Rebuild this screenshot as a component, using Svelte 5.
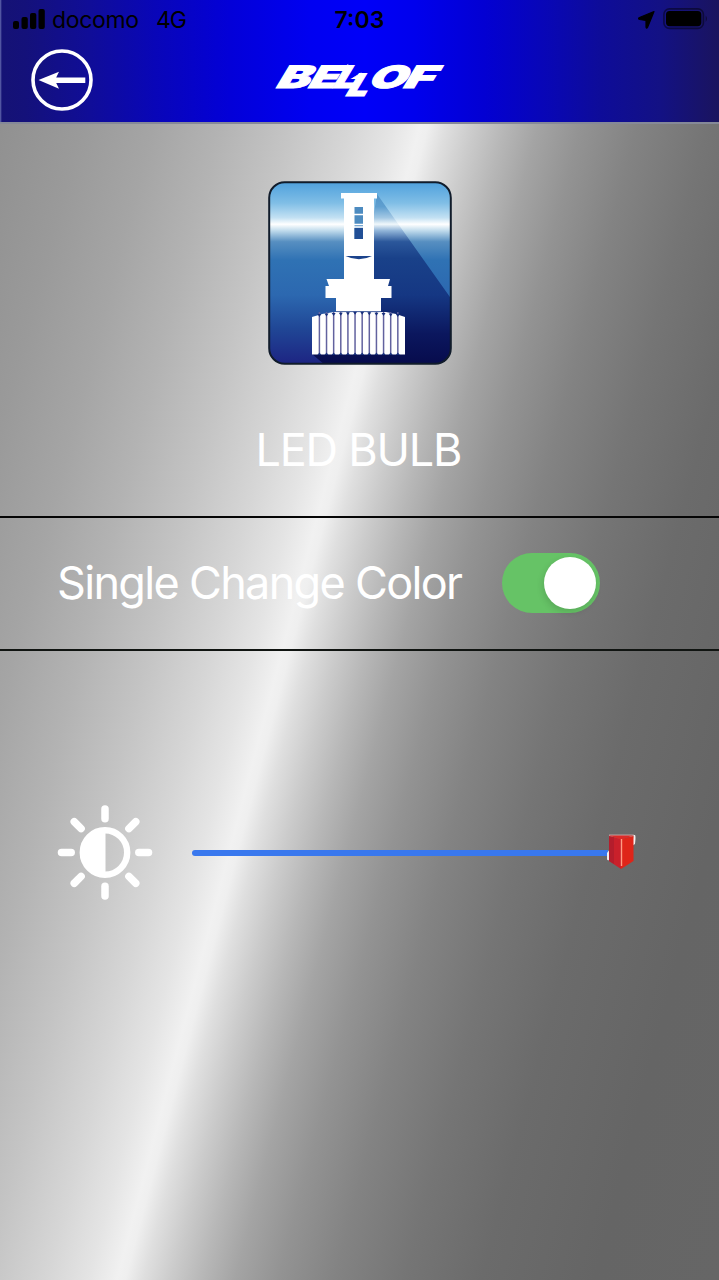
<script>
  let enabled = $state(true);
  const rays = [0, 45, 90, 135, 180, 225, 270, 315];
  const grooves = Array.from({ length: 12 }, (_, i) => i);
</script>

<main>
  <header>
    <div class="status">
      <svg class="signal" width="32" height="22" viewBox="0 0 32 22">
        <rect x="0" y="13" width="6" height="8" rx="2" />
        <rect x="8.5" y="9" width="6.3" height="12" rx="2" />
        <rect x="17" y="5" width="6.3" height="16" rx="2" />
        <rect x="25.5" y="1" width="6.3" height="20" rx="2" />
      </svg>
      <svg class="carrier" width="140" height="36" viewBox="0 0 140 36">
        <text x="0" y="28" textLength="87">docomo</text>
        <text x="104" y="28" textLength="31">4G</text>
      </svg>
      <svg class="clock" width="54" height="36" viewBox="0 0 54 36">
        <text x="1.5" y="28" textLength="50">7:03</text>
      </svg>
      <svg class="location" width="18" height="20" viewBox="0 0 18 20">
        <path d="M16 1.5 9.5 17.5 Q8.5 19 8 17 L8 10.5 1.5 9.5 Q-.5 8.5 1.5 7.5Z" stroke="#000" stroke-width="1.2" stroke-linejoin="round" />
      </svg>
      <svg class="battery" width="46" height="22" viewBox="0 0 46 22">
        <rect x=".9" y=".9" width="39.5" height="19.5" rx="5.5" fill="none" stroke="#000" stroke-opacity=".45" stroke-width="1.6" />
        <rect x="3" y="3" width="35.3" height="15.2" rx="3.6" />
        <path d="M42.7 7.5 q2.6 3.2 0 6.4z" opacity=".45" />
      </svg>
    </div>
    <div class="navbar">
      <button class="back" aria-label="Back">
        <svg width="64" height="64" viewBox="0 0 64 64">
          <circle cx="32" cy="32" r="29" fill="none" stroke="#fff" stroke-width="3.6" />
          <path d="M8.5 32 29 23.7 26.2 29.4H55.3V35H26.2L29 40.8Z" fill="#fff" />
        </svg>
      </button>
      <svg class="logo" width="214" height="60" viewBox="-20 0 214 60">
        <g transform="translate(0 29.5) skewX(-31)">
          <text x="2" y="0" textLength="33" lengthAdjust="spacingAndGlyphs">B</text>
          <text x="34" y="0" textLength="28" lengthAdjust="spacingAndGlyphs">E</text>
          <text x="59" y="0" textLength="22" lengthAdjust="spacingAndGlyphs">L</text>
          <path d="M56.500 -17.500 62 -22.500 V-17.500Z" />
          <text x="77" y="8.5" textLength="21" lengthAdjust="spacingAndGlyphs">L</text>
          <path d="M74.500 -9 80 -14 V-9Z" />
          <text x="94" y="0" textLength="37" lengthAdjust="spacingAndGlyphs">O</text>
          <text x="129" y="0" textLength="30" lengthAdjust="spacingAndGlyphs">F</text>
        </g>
      </svg>
    </div>
  </header>

  <section class="product">
    <svg class="bulb" width="184" height="184" viewBox="0 0 184 184">
      <defs>
        <linearGradient id="sky" x1="0" y1="0" x2="0" y2="1">
          <stop offset="0" stop-color="#4c9fdc" />
          <stop offset=".12" stop-color="#80bee6" />
          <stop offset=".2" stop-color="#c3e1f3" />
          <stop offset=".235" stop-color="#fff" />
          <stop offset=".27" stop-color="#c0dbec" />
          <stop offset=".33" stop-color="#578fc1" />
          <stop offset=".43" stop-color="#2f72b4" />
          <stop offset=".62" stop-color="#2c68b0" />
          <stop offset=".8" stop-color="#204796" />
          <stop offset="1" stop-color="#1d2382" />
        </linearGradient>
        <linearGradient id="shade" gradientUnits="userSpaceOnUse" x1="0" y1="0" x2="0" y2="184">
          <stop offset="0" stop-color="#4389c0" />
          <stop offset=".14" stop-color="#5f9fd0" />
          <stop offset=".2" stop-color="#a3c8e4" />
          <stop offset=".235" stop-color="#f0f7fb" />
          <stop offset=".27" stop-color="#90b4d8" />
          <stop offset=".33" stop-color="#2b579b" />
          <stop offset=".42" stop-color="#194189" />
          <stop offset=".62" stop-color="#153783" />
          <stop offset=".83" stop-color="#0b175e" />
          <stop offset="1" stop-color="#070b4c" />
        </linearGradient>
        <clipPath id="tile"><rect x="1" y="1" width="182" height="182" rx="15" /></clipPath>
      </defs>
      <g clip-path="url(#tile)">
        <rect width="184" height="184" fill="url(#sky)" />
        <path d="M109 13 184 119V184H57L44 173 70 130 98 80Z" fill="url(#shade)" />
      </g>
      <g fill="#fff">
        <path d="M73 12h36v5.5h-3V98h16l-2 7h3.500v12H113v17H68v-17h-10.500v-12H61l-2.500-7H76V17.500h-3z" />
        <path d="M44 136 54 133 66 131H118L128 133 137 136V173.500H44Z" />
      </g>
      <path d="M68 130.600H113" stroke="#173984" stroke-width=".8" />
      <path d="M77.500 75 H104 Q91 81.500 77.500 75Z" fill="#1b438c" />
      <rect x="86.500" y="26" width="8.500" height="32" fill="#4d8bc0" />
      <rect x="86.500" y="47" width="8.500" height="11" fill="#214f96" />
      <path d="M86 33.500h9M86 43.500h9M86 46h9" stroke="#fff" stroke-width="1.600" />
      {#each grooves as i}
        <path d={`M${51.4 + i * 7.13} 131V173.5`} stroke="#62629f" stroke-width="1.500" />
        <path d={`M${49.4 + i * 7.13} ${130.5 + Math.abs(i - 5.5) * 0.45} h4l-2 3z M${49.4 + i * 7.13} 174l2-2.500 2 2.500z`} fill="#172f7b" />
      {/each}
      <rect x="1.200" y="1.200" width="181.600" height="181.600" rx="15.500" fill="none" stroke="#111c2b" stroke-width="2" />
    </svg>
    <svg class="title" width="220" height="60" viewBox="0 0 220 60">
      <text x="5.5" y="46" textLength="207">LED BULB</text>
    </svg>
  </section>

  <section class="setting">
    <svg class="label" width="415" height="64" viewBox="0 0 415 64">
      <text x="1" y="48" textLength="406">Single Change Color</text>
    </svg>
    <button class="switch" class:enabled role="switch" aria-checked={enabled} aria-label="Single Change Color" onclick={() => (enabled = !enabled)}>
      <span></span>
    </button>
  </section>

  <section class="brightness">
    <svg class="sun" width="96" height="96" viewBox="-48 -47.5 96 96">
      <circle r="22.200" fill="none" stroke="#fff" stroke-width="6.400" />
      <path d="M.5 -23A23 23 0 0 0 .5 23Z" fill="#fff" />
      {#each rays as angle}
        <path d="M33.800 0H43.500" transform={`rotate(${angle})`} stroke="#fff" stroke-width="7.500" stroke-linecap="round" />
      {/each}
    </svg>
    <div class="track"></div>
    <svg class="thumb" width="32" height="40" viewBox="0 1 32 40">
      <path d="M2 21v6q0 2 3 1V17z M27 3h3q1 1 0 9l-3 2z" fill="#f2eeee" />
      <path d="M4 2.500H29L28 7 27 5H4Z" fill="#bca0a0" />
      <path d="M4 4 16 7V37L4 29Z" fill="#c9202b" />
      <path d="M4 4 9 5V32L4 29Z" fill="#a91c2c" opacity=".65" />
      <path d="M16 7 28.500 4V29L16 37Z" fill="#df2519" />
      <path d="M4 3.500H28.500L16 7.500Z" fill="#dc2a28" />
      <path d="M16.500 7V34" stroke="#ff9c83" stroke-width="1.400" />
    </svg>
  </section>
</main>

<style>
  :global(body) { margin: 0; }
  main {
    width: 719px;
    height: 1280px;
    overflow: hidden;
    display: flex;
    flex-direction: column;
    font-family: Inter, "Liberation Sans", sans-serif;
    background: linear-gradient(104.7deg, #8c8c8c 0, #919191 35px, #9a9a9a 110px, #a5a5a5 180px, #b3b3b3 245px, #c4c4c4 310px, #d6d6d6 370px, #e4e4e4 410px, #f1f1f1 438px, #efefef 446px, #dfdfdf 463px, #cbcbcb 490px, #b7b7b7 520px, #a4a4a4 552px, #939393 594px, #838383 648px, #757575 716px, #6b6b6b 790px, #656565 900px, #666 1020px);
  }
  svg { display: block; flex: none; }
  button { border: 0; padding: 0; background: none; }
  header {
    box-sizing: border-box;
    height: 124px;
    flex: none;
    border-bottom: 2px solid #858998;
    background: linear-gradient(90deg, #656bb0 0, #151275 2px, #14117a 25px, #100d98 90px, #0906b8 155px, #0300d8 230px, #0000f1 310px, #0000f8 365px, #0000ed 415px, #0300d2 485px, #0907b4 550px, #0e0c99 600px, #131184 660px, #1a145e 719px) padding-box;
  }
  .status { display: flex; height: 40px; align-items: flex-start; padding-left: 12.5px; }
  .signal { margin-top: 8px; }
  .carrier { margin-left: 7.5px; font-size: 23px; }
  .clock { margin-left: 141px; font-size: 23px; font-weight: 600; }
  .location { margin: 10px 0 0 251px; }
  .battery { margin: 8px 0 0 7px; }
  .navbar { display: flex; height: 80px; align-items: flex-start; padding: 8px 0 0 30px; }
  .logo { margin: 10px 0 0 158px; font-size: 31px; font-weight: 900; fill: #fff; stroke: #fff; stroke-width: 1px; }
  .product {
    box-sizing: border-box;
    height: 394px;
    flex: none;
    border-bottom: 2px solid #050505;
    display: flex;
    flex-direction: column;
    align-items: center;
    padding-top: 57px;
  }
  .title { margin-top: 55px; font-size: 45px; font-weight: 400; fill: #fff; }
  .setting {
    box-sizing: border-box;
    height: 132.500px;
    flex: none;
    border-bottom: 2px solid #101411;
    display: flex;
    align-items: center;
    padding-left: 56px;
  }
  .label { font-size: 45px; fill: #fff; }
  .switch { width: 98px; height: 60px; margin-left: 31px; padding: 4px; box-sizing: border-box; border-radius: 30px; background: #888; display: flex; }
  .switch.enabled { justify-content: flex-end; background: #66c366; }
  .switch span { width: 52px; height: 52px; border-radius: 50%; background: #fff; box-shadow: -1px 3px 7px #0002; }
  .brightness { display: flex; align-items: center; padding: 154px 0 0 57px; }
  .track { width: 416px; height: 6px; margin-left: 39px; border-radius: 3px 0 0 3px; background: #3978ee; }
  .thumb { margin-left: -3px; }
</style>
